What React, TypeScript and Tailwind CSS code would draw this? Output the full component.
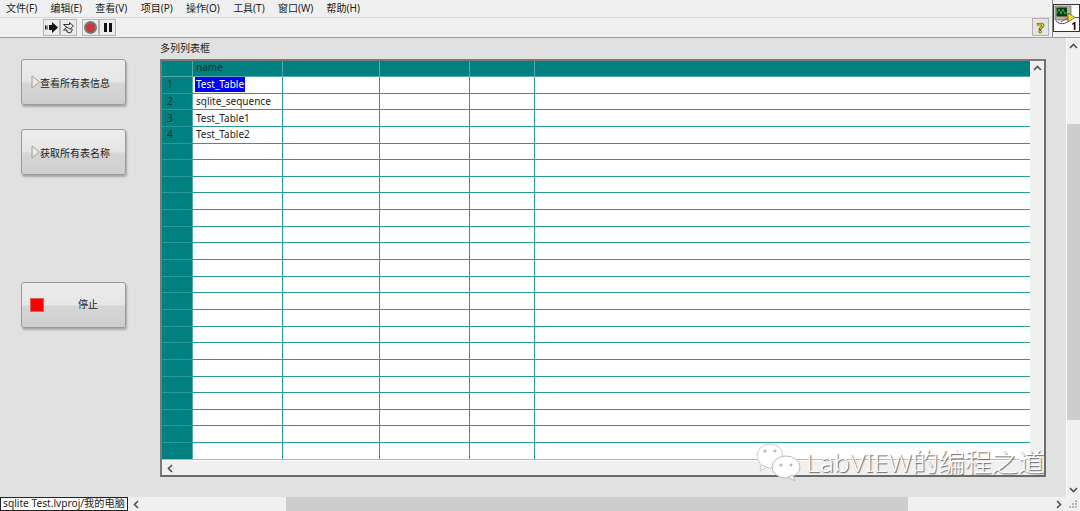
import React from "react"

const MENUS = ["文件(F)", "编辑(E)", "查看(V)", "项目(P)", "操作(O)", "工具(T)", "窗口(W)", "帮助(H)"]
const COLS = [90, 97, 90, 65]
const NAMES = ["Test_Table", "sqlite_sequence", "Test_Table1", "Test_Table2"]

const FONT = { fontFamily: '"Noto Sans", "Noto Sans CJK SC", sans-serif' }

function RoundChevron({ dir }: { dir: "up" | "down" | "left" | "right" }) {
  const pts = {
    up: "1,6 4.5,2.5 8,6",
    down: "1,3 4.5,6.5 8,3",
    left: "6,1 2.5,4.5 6,8",
    right: "3,1 6.5,4.5 3,8",
  }[dir]
  return (
    <svg width="9" height="9" viewBox="0 0 9 9">
      <polyline points={pts} fill="none" stroke="#505050" strokeWidth="1.6" />
    </svg>
  )
}

function ToolButton({ children }: { children: React.ReactNode }) {
  return (
    <div className="flex h-[17px] w-[17px] items-center justify-center border border-[#b5b5b5] bg-[#ececec]">
      {children}
    </div>
  )
}

function PanelButton({ label, stop }: { label: string; stop?: boolean }) {
  return (
    <div className="flex h-[46px] w-[105px] items-center rounded-[3px] border border-[#9a9a9a] bg-[linear-gradient(#ececec_0%,#e6e6e6_50%,#d6d6d6_52%,#cfcfcf_100%)] text-[10px] text-[#222] shadow-[1px_2px_2px_#a8a8a8]">
      {stop ? (
        <>
          <div className="ml-2 h-[14px] w-[14px] border border-[#e06060] bg-[#ff0000]" />
          <span className="ml-[34px] pb-[1px]">{label}</span>
        </>
      ) : (
        <>
          <svg className="ml-[9px] shrink-0" width="9" height="14" viewBox="0 0 9 14">
            <polygon points="1,1 8.5,7 1,13" fill="#e8e8e8" stroke="#a0a0a0" />
          </svg>
          <span className="pt-[2px]">{label}</span>
        </>
      )}
    </div>
  )
}

function TableRow({ index, name, selected }: { index?: number; name?: string; selected?: boolean }) {
  return (
    <div className="flex h-[16.65px] border-b border-[#2a9a96] last:border-b-[#8fcac7]">
      <div className="flex w-[31px] shrink-0 items-center border-r border-[#55aaa6] bg-[#008080] pl-[5px] text-[10px] text-[#0c2c2c]">
        {index}
      </div>
      <div className="flex w-[90px] shrink-0 items-center border-r border-[#2a9a96] pl-[2px] text-[10px] text-[#222]">
        {selected ? <span className="bg-[#0000ff] px-px leading-[15px] text-white">{name}</span> : <span className="px-px">{name}</span>}
      </div>
      {COLS.slice(1).map((w, i) => (
        <div key={i} className="shrink-0 border-r border-[#2a9a96]" style={{ width: w }} />
      ))}
      <div className="flex-1" />
    </div>
  )
}

export default function App() {
  return (
    <div className="relative flex h-[511px] w-[1080px] flex-col overflow-hidden bg-[#e1e1e1]" style={FONT}>
      {/* MENU */}
      <div className="flex h-[17px] shrink-0 items-center gap-[13.3px] bg-[#f0f0f0] pl-[6px] text-[10px] text-[#222]">
        {MENUS.map((m) => (
          <span key={m}>{m}</span>
        ))}
      </div>

      {/* TOOLBAR */}
      <div className="relative flex h-[21px] shrink-0 items-center border-t border-b border-t-[#d8d8d8] border-b-[#a0a0a0] bg-[#f0f0f0] pl-[43px]">
        <ToolButton>
          <svg width="14" height="11" viewBox="0 0 14 11">
            <path d="M0 3.5h1.5v4H0zM2.5 3.5H3v4h-.5zM4 3h3V0l6 5.5L7 11V8H4z" fill="#111" />
          </svg>
        </ToolButton>
        <ToolButton>
          <svg width="13" height="13" viewBox="0 0 13 13" fill="none" stroke="#333">
            <path d="M1.5 3.5h6V1.5l4 3.5-3 2.5 2 1-2 3.5-3.5-1v-2H1.5l3-2.5z" />
            <path d="M4 5.5l4.5 3" />
          </svg>
        </ToolButton>
        <div className="ml-[5px] flex">
          <ToolButton>
            <div className="h-[13px] w-[13px] rounded-full border-2 border-[#777] bg-[#c8383c]" />
          </ToolButton>
          <ToolButton>
            <div className="flex gap-[2px]">
              <div className="h-[9px] w-[3px] bg-[#111]" />
              <div className="h-[9px] w-[3px] bg-[#111]" />
            </div>
          </ToolButton>
        </div>
        <div className="absolute right-[31px] top-0 flex h-[18px] w-[17px] items-center justify-center border border-[#b0b0b0] bg-[#e4e4e4] text-[15px] font-bold leading-none text-[#efe400] [-webkit-text-stroke:0.6px_#333]">
          ?
        </div>
      </div>

      {/* VI ICON */}
      <div className="absolute left-[1052px] top-0 h-[37px] w-[28px] border-l border-[#8a8a8a] bg-[#f0f0f0] pt-[4px]">
        <div className="relative h-[28px] w-[27px] border border-[#333] bg-white">
          <svg width="26" height="26" viewBox="0 0 26 26">
            <rect x="1" y="1" width="16" height="14" fill="#b8b49c" stroke="#555" strokeWidth="0.6" />
            <rect x="2.5" y="2.5" width="10.5" height="9" fill="#0c3c18" />
            <path d="M3 8l2-4 2 5 2-5 2 5 1.5-2" fill="none" stroke="#30d040" strokeWidth="0.8" />
            <path d="M2 16c4 4 9 3 13 0" fill="none" stroke="#3040c0" />
            <path d="M7 17l8-5" stroke="#e03020" />
            <polygon points="14,8 21,12.5 14,17" fill="#f0e820" stroke="#333" strokeWidth="0.6" />
            <path d="M21 12.5h4" stroke="#e03020" />
          </svg>
          <span className="absolute bottom-0 right-[2px] text-[10px] font-bold leading-none text-black">1</span>
        </div>
      </div>

      {/* BODY */}
      <div className="relative flex min-h-0 flex-1">
        <div className="flex w-[160px] shrink-0 flex-col pl-[21px] pt-[21px]">
          <PanelButton label="查看所有表信息" />
          <div className="mt-[24px]">
            <PanelButton label="获取所有表名称" />
          </div>
          <div className="mt-[107px]">
            <PanelButton label="停止" stop />
          </div>
        </div>

        <div className="flex w-[886px] shrink-0 flex-col pt-[4px]">
          <div className="h-[17px] text-[10px] leading-[12px] text-[#222]">多列列表框</div>
          <div className="flex h-[418px] flex-col border-2 border-t-[#7a7a7a] border-r-[#6f6f6f] border-b-[#6a6a6a] border-l-[#7a7a7a] bg-[#f0f0f0]">
            <div className="flex min-h-0 flex-1">
              <div className="min-w-0 flex-1 bg-white">
                <div className="flex h-[16px] border-b border-[#55aaa6] bg-[#008080] text-[10px] text-[#0c2c2c]">
                  <div className="w-[31px] shrink-0 border-r border-[#55aaa6]" />
                  <div className="flex w-[90px] shrink-0 items-center border-r border-[#55aaa6] pb-[2px] pl-[3px]">name</div>
                  {COLS.slice(1).map((w, i) => (
                    <div key={i} className="shrink-0 border-r border-[#55aaa6]" style={{ width: w }} />
                  ))}
                </div>
                {Array.from({ length: 23 }).map((_, i) => (
                  <TableRow key={i} index={i < 4 ? i + 1 : undefined} name={NAMES[i]} selected={i === 0} />
                ))}
              </div>
              <div className="flex w-[14px] shrink-0 justify-center pt-[3px]">
                <div className="h-[9px]">
                  <RoundChevron dir="up" />
                </div>
              </div>
            </div>
            <div className="flex h-[14px] shrink-0 items-center pl-1">
              <RoundChevron dir="left" />
            </div>
          </div>
        </div>

        {/* RIGHT SCROLLBAR */}
        <div className="ml-auto flex w-[14px] shrink-0 flex-col items-center border-l border-white/60 bg-[#f0f0f0]">
          <div className="flex h-[16px] items-center">
            <RoundChevron dir="up" />
          </div>
          <div className="mt-[70px] h-[296px] w-full bg-[#cdcdcd]" />
          <div className="mt-auto flex h-[16px] items-center">
            <RoundChevron dir="down" />
          </div>
        </div>

        {/* WATERMARK */}
        <div className="absolute left-[755px] top-[404px] flex items-center text-[26.5px] font-light leading-none text-white [text-shadow:1px_1px_1px_#666]">
          <svg width="50" height="40" viewBox="0 0 50 40">
            <ellipse cx="15" cy="14" rx="13" ry="12" fill="#fff" stroke="#ccc" />
            <path d="M6 23l-1 6 7-4z" fill="#fff" stroke="#ccc" />
            <ellipse cx="31" cy="25" rx="14" ry="11" fill="#fff" stroke="#bbb" />
            <path d="M38 33l2 6-7-4z" fill="#fff" stroke="#bbb" />
            <circle cx="10" cy="9" r="1.6" fill="#bbb" />
            <circle cx="20" cy="9" r="1.6" fill="#bbb" />
            <circle cx="26" cy="23" r="1.6" fill="#bbb" />
            <circle cx="36" cy="23" r="1.6" fill="#bbb" />
          </svg>
          <span className="ml-[1px] whitespace-nowrap">LabVIEW的编程之道</span>
        </div>
      </div>

      {/* STATUS */}
      <div className="flex h-[14px] shrink-0 items-center bg-[#f0f0f0]">
        <div className="flex h-[14px] w-[128px] shrink-0 items-center overflow-hidden whitespace-nowrap border border-[#222] bg-white pl-[2px] text-[10.2px] text-[#222]">
          sqlite Test.lvproj/我的电脑
        </div>
        <div className="ml-[4px] flex w-[10px] items-center">
          <RoundChevron dir="left" />
        </div>
        <div className="ml-[144px] h-[14px] w-[622px] bg-[#cdcdcd]" />
        <div className="ml-[146px] flex items-center">
          <RoundChevron dir="right" />
        </div>
        <svg className="ml-auto mr-[2px]" width="9" height="9" viewBox="0 0 9 9" fill="#b5b5b5">
          <rect x="6" y="0" width="2" height="2" />
          <rect x="3" y="3" width="2" height="2" />
          <rect x="6" y="3" width="2" height="2" />
          <rect x="0" y="6" width="2" height="2" />
          <rect x="3" y="6" width="2" height="2" />
          <rect x="6" y="6" width="2" height="2" />
        </svg>
      </div>
    </div>
  )
}
